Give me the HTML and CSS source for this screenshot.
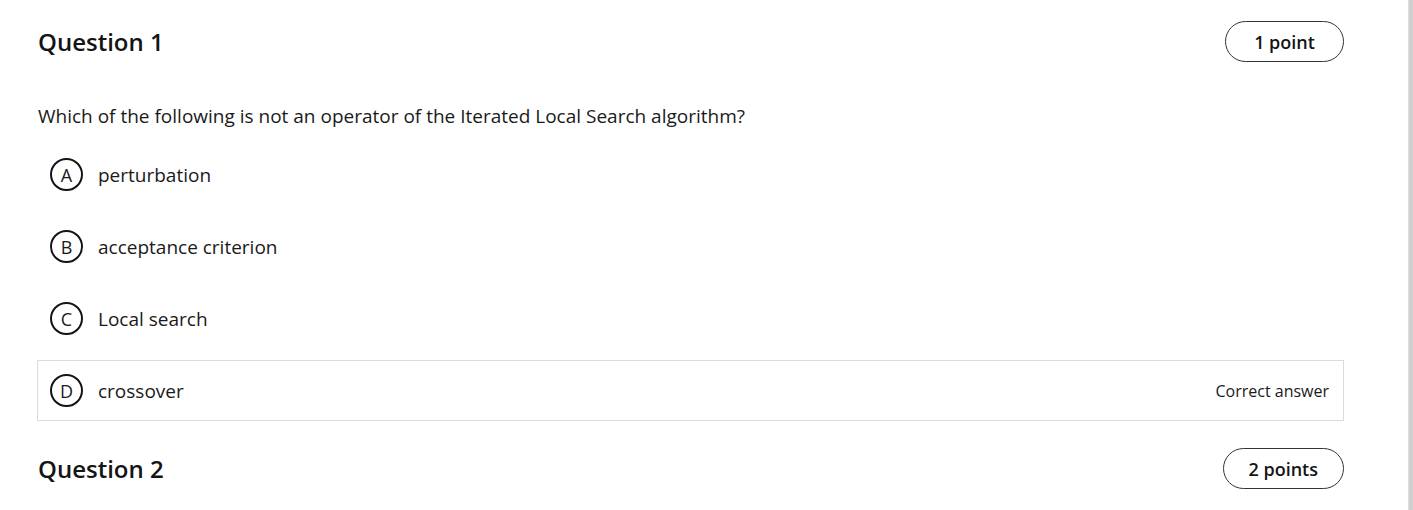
FILE: index.html
```html
<!DOCTYPE html>
<html lang="en">
<head>
<meta charset="utf-8">
<title>Quiz</title>
<link rel="stylesheet" href="styles.css">
</head>
<body>
<div class="page">
  <main class="content">
    <section class="question">
      <header class="q-header">
        <h2 class="q-title">Question 1</h2>
        <span class="points">1 point</span>
      </header>
      <p class="q-text">Which of the following is not an operator of the Iterated Local Search algorithm?</p>
      <ul class="options">
        <li class="option"><span class="letter">A</span><span class="opt-text">perturbation</span></li>
        <li class="option"><span class="letter">B</span><span class="opt-text">acceptance criterion</span></li>
        <li class="option"><span class="letter">C</span><span class="opt-text">Local search</span></li>
        <li class="option option-correct"><span class="letter">D</span><span class="opt-text">crossover</span><span class="correct-label">Correct answer</span></li>
      </ul>
    </section>
    <section class="question">
      <header class="q-header">
        <h2 class="q-title">Question 2</h2>
        <span class="points">2 points</span>
      </header>
    </section>
  </main>
  <div class="scrollbar"></div>
</div>
</body>
</html>
```

FILE: styles.css
```css
* { box-sizing: border-box; }
html, body { margin: 0; padding: 0; background: #fff; }
body {
  font-family: "Open Sans", "Liberation Sans", sans-serif;
  color: #1a1a1a;
  height: 510px;
  overflow: hidden;
}
.page {
  display: flex;
  height: 510px;
}
.content {
  flex: 1;
  padding: 21px 0 0 37px;
}
.question {
  width: 1307px;
}
.q-header {
  display: flex;
  justify-content: space-between;
  align-items: center;
  height: 41px;
}
.q-title {
  margin: 1px 0 0 1px;
  font-size: 24px;
  font-weight: 600;
  line-height: 30px;
  color: #141414;
}
.points {
  display: inline-flex;
  align-items: center;
  justify-content: center;
  height: 41px;
  min-width: 119px;
  padding: 0 25px;
  border: 1.5px solid #333;
  border-radius: 21px;
  font-size: 18px;
  font-weight: 600;
  color: #141414;
}
.q-text {
  margin: 41px 0 0 1px;
  font-size: 19px;
  line-height: 26px;
  color: #1a1a1a;
}
.options {
  list-style: none;
  margin: 15px 0 27px 0;
  padding: 0;
  display: flex;
  flex-direction: column;
  gap: 11px;
}
.option {
  display: flex;
  align-items: center;
  height: 61px;
  padding: 0 14px 0 12px;
  border: 1.5px solid transparent;
  font-size: 19px;
  color: #1a1a1a;
}
.option-correct {
  border-color: #dcdcdc;
}
.letter {
  display: inline-flex;
  align-items: center;
  justify-content: center;
  width: 33px;
  height: 33px;
  border: 2.5px solid #141414;
  border-radius: 50%;
  font-size: 18px;
  font-weight: 500;
  line-height: 1;
  margin-right: 15px;
  flex: none;
}
.opt-text {
  flex: 1;
}
.correct-label {
  font-size: 16px;
  color: #1a1a1a;
}
.scrollbar {
  width: 5px;
  height: 510px;
  background: #cfcfcf;
  border-left: 1px solid #dedede;
  flex: none;
}
```
